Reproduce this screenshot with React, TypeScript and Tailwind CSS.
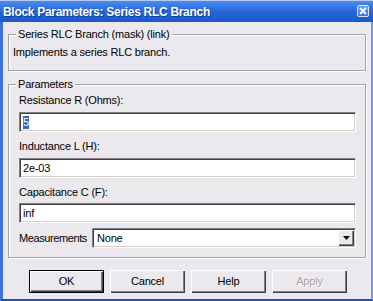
import React from "react";

const font = { fontFamily: '"Liberation Sans", Arial, sans-serif' };

function GroupBox({ title, className, children }: { title: string; className: string; children: React.ReactNode }) {
  return (
    <div
      className={`relative border border-[#a5a4a9] shadow-[1px_1px_0_#ffffff,inset_1px_1px_0_#ffffff] ${className}`}
    >
      <span className="absolute -top-[7px] left-[7px] bg-[#ebe9ed] px-[2px] text-[11px] leading-[13px] tracking-[-0.2px] text-black">
        {title}
      </span>
      {children}
    </div>
  );
}

function TextField({ value, selected }: { value: string; selected?: boolean }) {
  return (
    <div className="h-[20px] w-[337px] border border-t-[#808080] border-l-[#808080] border-b-white border-r-white bg-white shadow-[inset_1px_1px_0_#404040,inset_-1px_-1px_0_#d4d0c8] flex items-center pl-[3px] text-[11px] leading-[13px] text-black">
      {selected ? <span className="bg-[#316ac5] text-white">{value}</span> : value}
    </div>
  );
}

function Button({ label, isDefault, disabled }: { label: string; isDefault?: boolean; disabled?: boolean }) {
  const frame = isDefault
    ? "border border-black shadow-[inset_1px_1px_0_#ffffff,inset_-1px_-1px_0_#404040,inset_-2px_-2px_0_#808080]"
    : "shadow-[inset_1px_1px_0_#ffffff,inset_-1px_-1px_0_#404040,inset_-2px_-2px_0_#808080]";
  return (
    <div
      className={`h-[23px] w-[75px] flex items-center justify-center bg-[#ebe9ed] text-[11px] ${frame} ${
        disabled ? "text-[#a3a3a3] [text-shadow:1px_1px_0_#ffffff]" : "text-black"
      }`}
    >
      {label}
    </div>
  );
}

export default function App() {
  return (
    <div className="w-[373px] h-[301px] flex flex-col overflow-hidden" style={font}>
      {/* title bar */}
      <div className="h-[22px] flex flex-col">
        <div className="h-[1px] bg-[#b7cbef]" />
        <div className="flex-1 flex items-center justify-between pl-[3px] pr-[4px] bg-gradient-to-b from-[#4a8cf0] via-[#2566da] to-[#1c58c9]">
          <span className="text-white font-bold text-[12px] leading-[14px] tracking-[-0.3px] [text-shadow:1px_1px_0_#0f3b9a]">
            Block Parameters: Series RLC Branch
          </span>
          <div className="w-[12px] h-[12px] mb-[1px] rounded-[2px] border border-[#dfe8fb] bg-gradient-to-b from-[#6c9ef0] to-[#3a72dc] flex items-center justify-center">
            <svg width="8" height="8" viewBox="0 0 8 8">
              <path d="M1 1 L7 7 M7 1 L1 7" stroke="#ffffff" strokeWidth="1.8" />
            </svg>
          </div>
        </div>
      </div>

      {/* client */}
      <div className="flex-1 flex flex-col bg-[#ebe9ed] border-l-[3px] border-l-[#3d73d8] border-r-2 border-r-[#6b9bea] border-b-2 border-b-[#1f4fae] pl-[5px] tracking-[-0.2px]">
        <GroupBox title="Series RLC Branch (mask) (link)" className="mt-[12px] w-[358px] h-[37px] pt-[11px] pl-[4px]">
          <div className="text-[11px] leading-[13px] text-black">Implements a series RLC branch.</div>
        </GroupBox>

        <GroupBox title="Parameters" className="mt-[13px] w-[358px] h-[174px] pt-[9px] pl-[10px] flex flex-col">
          <div className="text-[11px] leading-[13px] text-black">Resistance R (Ohms):</div>
          <div className="mt-[5px]">
            <TextField value="5" selected />
          </div>
          <div className="mt-[8px] text-[11px] leading-[13px] text-black">Inductance L (H):</div>
          <div className="mt-[5px]">
            <TextField value="2e-03" />
          </div>
          <div className="mt-[8px] text-[11px] leading-[13px] text-black">Capacitance C (F):</div>
          <div className="mt-[4px]">
            <TextField value="inf" />
          </div>
          <div className="mt-[5px] flex items-center">
            <span className="w-[73px] text-[11px] leading-[13px] tracking-[-0.4px] text-black">Measurements</span>
            <div className="h-[20px] w-[264px] border border-t-[#808080] border-l-[#808080] border-b-white border-r-white bg-white shadow-[inset_1px_1px_0_#404040,inset_-1px_-1px_0_#d4d0c8] flex items-center justify-between pl-[4px] pr-[1px]">
              <span className="text-[11px] leading-[13px] text-black">None</span>
              <div className="w-[16px] h-[16px] bg-[#ebe9ed] shadow-[inset_1px_1px_0_#ffffff,inset_-1px_-1px_0_#404040,inset_-2px_-2px_0_#808080] flex items-center justify-center">
                <svg width="7" height="4" viewBox="0 0 7 4">
                  <path d="M0 0 H7 L3.5 4 Z" fill="#000000" />
                </svg>
              </div>
            </div>
          </div>
        </GroupBox>

        <div className="mt-[12px] pl-[21px] flex gap-[6px]">
          <Button label="OK" isDefault />
          <Button label="Cancel" />
          <Button label="Help" />
          <Button label="Apply" disabled />
        </div>
      </div>
    </div>
  );
}
